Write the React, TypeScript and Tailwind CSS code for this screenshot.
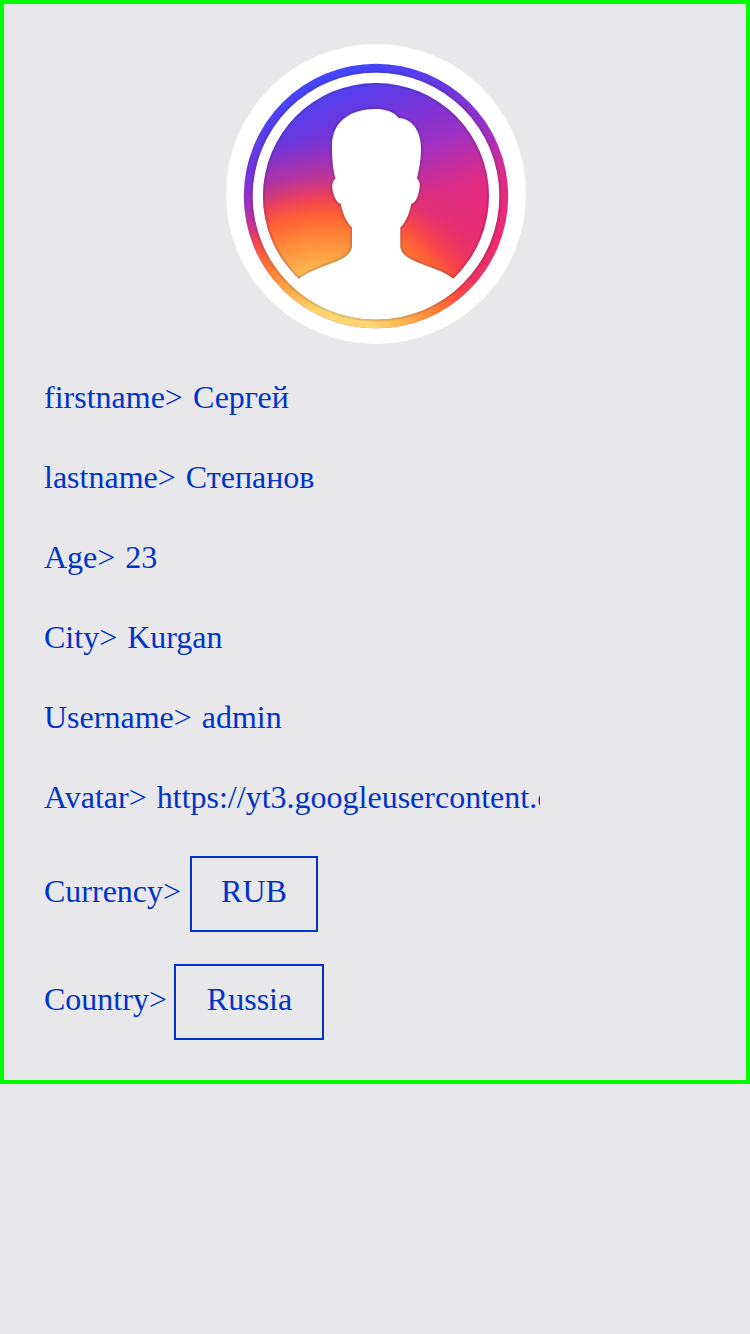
const HEAD =
  'M376 109 C384 109 394 111.5 398.5 118 C412 118.500 421 131 421 148 C421 160 419 170 416.800 178.500 C420.500 181 420 187 418.800 192 C417.500 198 415 203 411.300 203.700 C409.500 213 406 222 400.300 227.500 L400.300 247 C402 258 417 262 431 267.500 C440 271 446 273 452.800 278.500 L470 330 L282 330 L299.200 278.500 C307 273 313 270.500 322 267 C336 261.500 350 258 352 247 L352 227.500 C346.500 222 342.500 213 340.800 203.700 C337 203 334.500 198 333 192 C331.500 187 332 181 335.500 178.500 C333 170 332 160 332 146 C332 121 351 109 376 109 Z';

function SunStops() {
  return (
    <>
      <stop offset="0.28" stopColor="#fdd670" />
      <stop offset="0.39" stopColor="#fcb850" />
      <stop offset="0.54" stopColor="#ff8838" />
      <stop offset="0.65" stopColor="#ff6035" />
      <stop offset="0.73" stopColor="#f84448" stopOpacity="0.85" />
      <stop offset="0.83" stopColor="#e03868" stopOpacity="0.45" />
      <stop offset="1" stopColor="#c03088" stopOpacity="0" />
    </>
  );
}

function SkyStops() {
  return (
    <>
      <stop offset="0" stopColor="#4545fa" />
      <stop offset="0.2" stopColor="#6a38de" />
      <stop offset="0.31" stopColor="#8632d0" />
      <stop offset="0.42" stopColor="#a030c2" />
      <stop offset="0.61" stopColor="#dc2c86" />
      <stop offset="0.84" stopColor="#f0286e" />
      <stop offset="1" stopColor="#fa3055" />
    </>
  );
}

function Avatar() {
  return (
    <svg
      className="ml-[182px] block size-[300px] shrink-0 rounded-full bg-white"
      viewBox="226 44 300 300"
      role="img"
    >
      <defs>
        <linearGradient id="sky" gradientUnits="userSpaceOnUse" x1="315" y1="80" x2="398" y2="305">
          <SkyStops />
        </linearGradient>
        <linearGradient id="rimSky" gradientUnits="userSpaceOnUse" x1="325" y1="82" x2="416" y2="315">
          <SkyStops />
        </linearGradient>
        <radialGradient id="sun" gradientUnits="userSpaceOnUse" cx="326" cy="354" r="215">
          <SunStops />
        </radialGradient>
        <radialGradient id="rimSun" gradientUnits="userSpaceOnUse" cx="334" cy="366" r="203">
          <SunStops />
        </radialGradient>
        <clipPath id="disc">
          <circle cx="376" cy="196" r="113" />
        </clipPath>
        <clipPath id="rim">
          <circle cx="376" cy="196" r="132.2" />
        </clipPath>
        <clipPath id="body">
          <circle cx="376" cy="196" r="123.3" />
        </clipPath>
        <filter id="soft" x="-10%" y="-10%" width="120%" height="120%">
          <feGaussianBlur stdDeviation="0.9" />
        </filter>
      </defs>
      <g clipPath="url(#rim)">
        <rect x="226" y="44" width="300" height="300" fill="url(#rimSky)" />
        <rect x="226" y="44" width="300" height="300" fill="url(#rimSun)" />
      </g>
      <circle cx="376" cy="196" r="123.5" fill="none" stroke="#30204a" strokeOpacity="0.3" strokeWidth="2" filter="url(#soft)" />
      <circle cx="376" cy="196" r="123.3" fill="#fff" />
      <g clipPath="url(#disc)">
        <rect x="226" y="44" width="300" height="300" fill="url(#sky)" />
        <rect x="226" y="44" width="300" height="300" fill="url(#sun)" />
        <circle cx="376" cy="196" r="113" fill="none" stroke="#30204a" strokeOpacity="0.35" strokeWidth="2" filter="url(#soft)" />
        <path d={HEAD} fill="none" stroke="#30204a" strokeOpacity="0.35" strokeWidth="2" filter="url(#soft)" />
      </g>
      <path d={HEAD} fill="#fff" clipPath="url(#body)" />
    </svg>
  );
}

const fields = [
  ['firstname', 'Сергей'],
  ['lastname', 'Степанов'],
  ['Age', '23'],
  ['City', 'Kurgan'],
  ['Username', 'admin'],
];

export default function App() {
  return (
    <div className="min-h-[1334px] bg-[#e8e8ea] font-['Liberation_Serif','Times_New_Roman',serif] text-[32px] leading-10 text-[#0033c7]">
      <main className="flex h-[1084px] flex-col border-4 border-[#00ff00] p-10">
        <Avatar />
        <div className="mt-[33px] flex flex-col gap-10">
          {fields.map(([label, value]) => (
            <div key={label} className="flex h-10 gap-[10px] whitespace-nowrap">
              <span>{label}&gt;</span>
              <span>{value}</span>
            </div>
          ))}
          <div className="flex h-10 w-[496px] gap-[10px] overflow-hidden whitespace-nowrap">
            <span>Avatar&gt;</span>
            <span>https://yt3.googleusercontent.com</span>
          </div>
        </div>
        <div className="mt-[39px] flex flex-col gap-8">
          <div className="flex h-[76px]">
            <span className="w-[146px] pt-[15px]">Currency&gt;</span>
            <button className="flex w-32 justify-center border-2 border-[#0033c7] pt-[13px]">RUB</button>
          </div>
          <div className="flex h-[76px]">
            <span className="w-[130px] pt-[15px]">Country&gt;</span>
            <button className="flex w-[150px] justify-center border-2 border-[#0033c7] pt-[13px] pl-px">Russia</button>
          </div>
        </div>
      </main>
    </div>
  );
}
